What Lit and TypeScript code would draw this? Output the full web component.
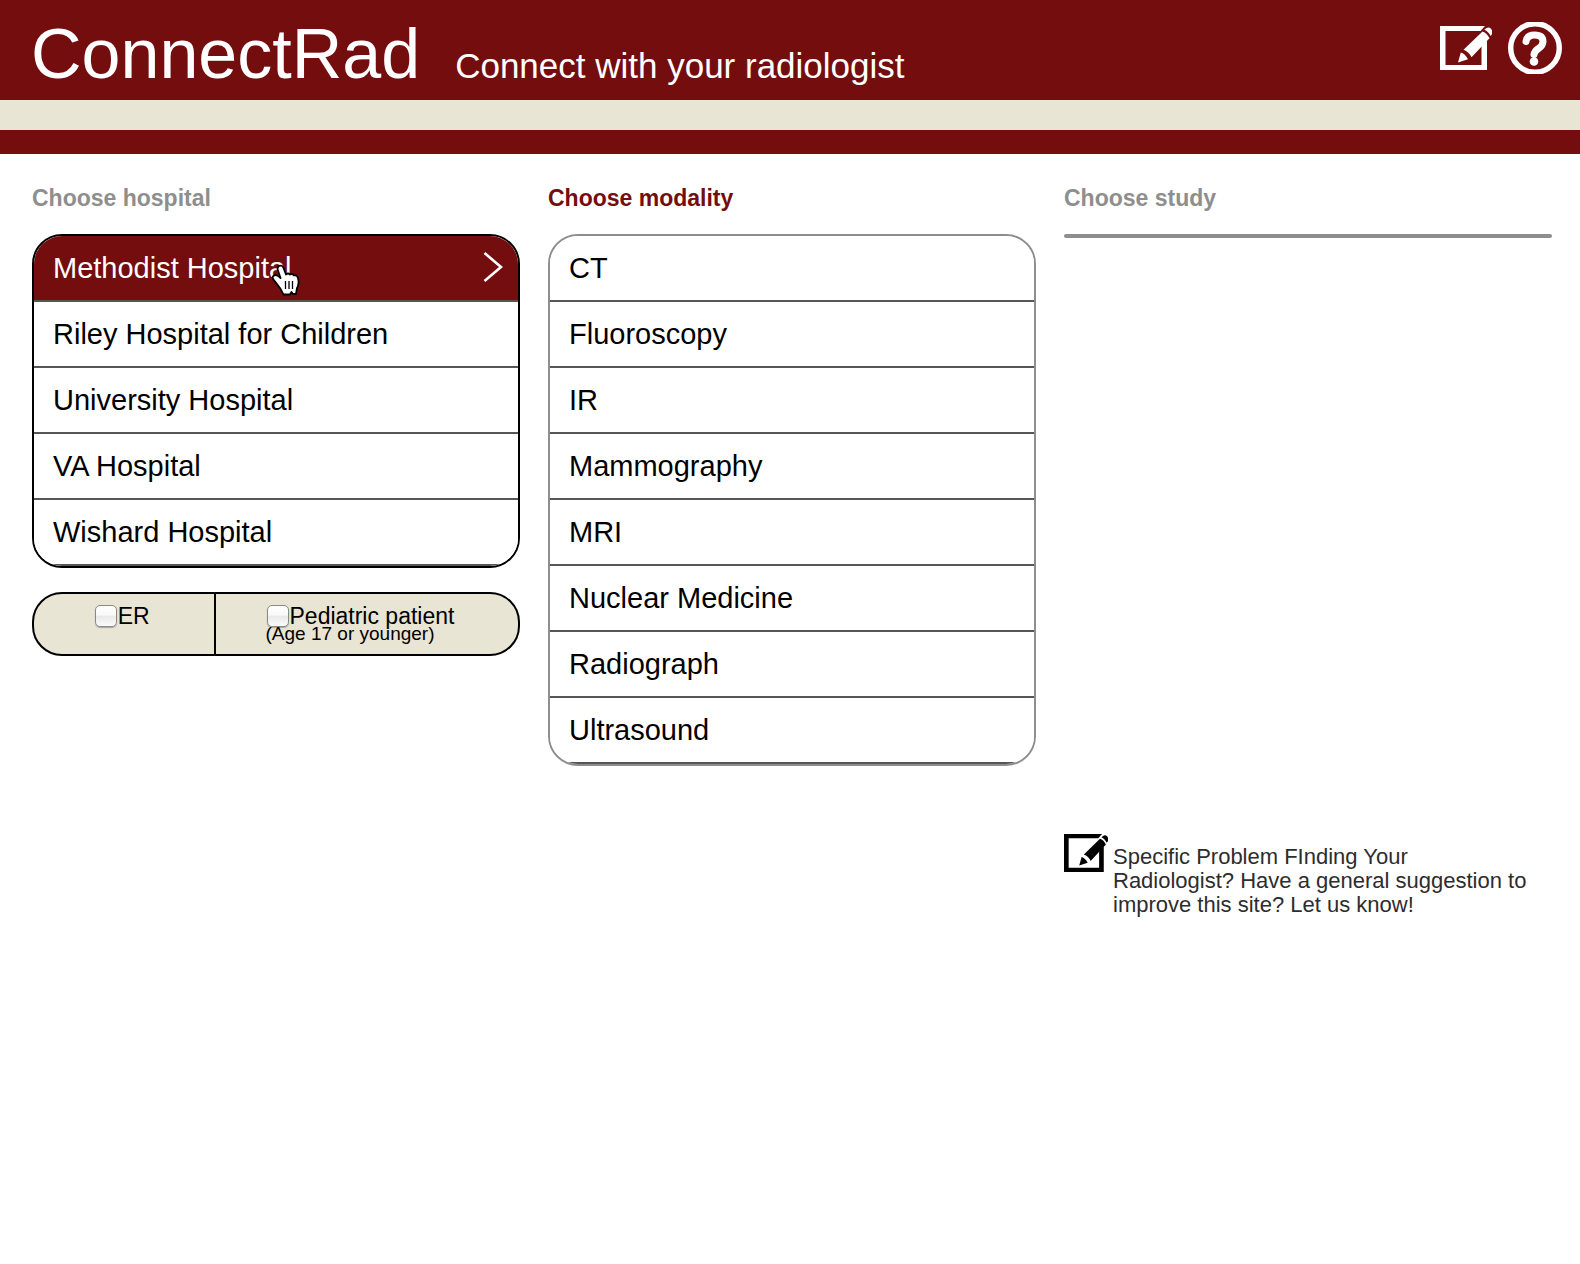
import { LitElement, html, css, svg } from "lit";
import { customElement, property, state } from "lit/decorators.js";
import { classMap } from "lit/directives/class-map.js";

const HOSPITALS = [
  "Methodist Hospital",
  "Riley Hospital for Children",
  "University Hospital",
  "VA Hospital",
  "Wishard Hospital",
];

const MODALITIES = [
  "CT",
  "Fluoroscopy",
  "IR",
  "Mammography",
  "MRI",
  "Nuclear Medicine",
  "Radiograph",
  "Ultrasound",
];

// Square sheet with a pencil across its upper right corner.
const editShape = svg`
  <path fill="currentColor" d="M0 0H45L40.500 5H5.500V39H41.500V20L47 14.500V44H0Z"></path>
  <path fill="currentColor" d="M18 36.500L20.800 26.500Q25 27.500 28 33.200Z"></path>
  <path fill="currentColor" d="M23.500 23.800L42.500 5.500Q47 7 49.500 12.300L31.500 31.300Q29 26 23.500 23.800Z"></path>
  <path fill="currentColor" d="M44.300 3.800L46.500 2Q49 0.800 51.200 3Q53 5.500 51.800 8.500L50.600 10Q48.500 5.500 44.300 3.800Z"></path>`;

@customElement("choice-list")
export class ChoiceList extends LitElement {
  @property({ type: Array }) items: string[] = [];
  @property() selected = "";
  @property({ type: Boolean }) done = false;

  static styles = css`
    :host {
      display: block;
    }
    .list {
      margin: 0;
      padding: 0;
      list-style: none;
      border: 2px solid #8e8e8e;
      border-radius: 30px;
      overflow: hidden;
    }
    .list.done {
      border-color: #000;
    }
    .list.empty {
      border-radius: 2px;
      background: #8e8e8e;
    }
    .item {
      position: relative;
      border-bottom: 2px solid #565656;
    }
    .choice {
      display: flex;
      align-items: center;
      justify-content: space-between;
      width: 100%;
      height: 64px;
      margin: 0;
      padding: 0 15px 0 19px;
      border: 0;
      background: #fff;
      color: #000;
      font: 29px/32px "Liberation Sans", Arial, sans-serif;
      text-align: left;
      cursor: pointer;
    }
    .choice.selected {
      background: #740d0e;
      color: #fff;
    }
    .chevron {
      flex: none;
      width: 20px;
      height: 32px;
      margin-bottom: 2px;
    }
    .pointer {
      position: absolute;
      left: 236px;
      top: 26px;
      width: 34px;
      height: 38px;
      pointer-events: none;
    }
  `;

  private choose(item: string) {
    this.dispatchEvent(new CustomEvent("choose", { detail: item }));
  }

  private renderChevron() {
    return html`
      <svg class="chevron" viewBox="0 0 20 32" aria-hidden="true">
        <path d="M1.500 2L18 16L1.500 30" fill="none" stroke="#fff" stroke-width="2.600"></path>
      </svg>`;
  }

  private renderPointer() {
    return html`
      <svg class="pointer" viewBox="0 0 34 38" aria-hidden="true">
        <path
          d="M9 4Q12 2.500 13.500 6L16 12.500Q18 10.500 20 12.500Q22.500 11 24 13.500Q27 12.500 28 16Q29.500 22 27 26L26 32H23L21.500 30L20 32.500H13.500Q11 26.500 7 22Q3 17.500 2.500 15.500Q3.500 11.500 9 14.500L10.500 16L7.500 7Q7.500 5 9 4Z"
          fill="#fff" stroke="#000" stroke-width="1.800" stroke-linejoin="round"></path>
        <path d="M15.500 19V27M19 19V27M22.500 19V27" stroke="#000" stroke-width="1.300"></path>
      </svg>`;
  }

  render() {
    const empty = this.items.length === 0;
    return html`
      <ul class=${classMap({ list: true, done: this.done, empty })}>
        ${this.items.map((item) => {
          const selected = item === this.selected;
          return html`
            <li class="item">
              <button
                type="button"
                class=${classMap({ choice: true, selected })}
                aria-pressed=${selected ? "true" : "false"}
                @click=${() => this.choose(item)}
              >
                <span>${item}</span>
                ${selected ? this.renderChevron() : null}
              </button>
              ${selected && this.done ? this.renderPointer() : null}
            </li>`;
        })}
      </ul>`;
  }
}

@customElement("app-root")
export class AppRoot extends LitElement {
  @state() private hospital = "Methodist Hospital";
  @state() private modality = "";

  static styles = css`
    :host {
      display: block;
      min-height: 100vh;
      background: #fff;
      color: #000;
      font-family: "Liberation Sans", Arial, sans-serif;
    }
    .banner {
      display: flex;
      align-items: center;
      justify-content: space-between;
      height: 100px;
      padding: 0 18px 0 31px;
      box-sizing: border-box;
      background: #740d0e;
      color: #fff;
    }
    .brand {
      display: flex;
      align-items: baseline;
      gap: 35px;
      padding-top: 8px;
    }
    .name {
      margin: 0;
      font-size: 70px;
      line-height: 80px;
      font-weight: 400;
    }
    .tagline {
      margin: 0;
      font-size: 35px;
      line-height: 40px;
    }
    .tools {
      display: flex;
      align-items: center;
      gap: 16px;
      padding-bottom: 4px;
    }
    .tool {
      display: block;
      color: #fff;
    }
    .tool svg,
    .note-icon {
      display: block;
    }
    .edit {
      width: 52px;
      height: 44px;
    }
    .help {
      width: 54px;
      height: 52px;
    }
    .stripe {
      height: 30px;
      background: #e8e5d5;
      border-bottom: 24px solid #740d0e;
    }
    .steps {
      display: grid;
      grid-template-columns: repeat(3, minmax(0, 1fr));
      column-gap: 28px;
      row-gap: 68px;
      align-items: start;
      padding: 28px 28px 32px 32px;
    }
    .heading {
      margin: 0 0 20px;
      color: #8e8e8e;
      font-size: 23px;
      line-height: 32px;
      font-weight: 700;
    }
    .heading.current {
      color: #740d0e;
    }
    .flags {
      display: grid;
      grid-template-columns: 3fr 5fr;
      height: 60px;
      margin-top: 24px;
      border: 2px solid #000;
      border-radius: 30px;
      background: #e8e5d5;
      overflow: hidden;
    }
    .flag {
      display: flex;
      flex-direction: column;
      align-items: center;
      padding-top: 11px;
    }
    .flag + .flag {
      align-items: flex-start;
      padding-left: 50px;
    }
    .flag:first-child {
      border-right: 2px solid #000;
    }
    .check {
      display: flex;
      align-items: center;
      gap: 1px;
      padding: 0 4px 0 1px;
      font-size: 23px;
      line-height: 22px;
    }
    .box {
      appearance: none;
      width: 22px;
      height: 22px;
      margin: 0;
      border: 1px solid #8a8a86;
      border-radius: 5px;
      background: linear-gradient(#fff, #f8f8f8 45%, #e9e9eb 52%, #fbfbfb);
      box-shadow: 0 1px 1px #a9a79c;
    }
    .box:checked {
      background: #740d0e;
    }
    .hint {
      font-size: 19px;
      line-height: 14px;
    }
    .note {
      grid-column: 3;
      display: flex;
      align-items: flex-start;
      gap: 5px;
      padding-right: 20px;
      color: #2d2d2d;
      text-decoration: none;
    }
    .note-icon {
      flex: none;
      width: 44px;
      height: 38px;
      color: #000;
    }
    .note-text {
      padding-top: 11px;
      font-size: 22px;
      line-height: 24px;
    }
  `;

  render() {
    return html`
      <header>
        <div class="banner">
          <div class="brand">
            <h1 class="name">ConnectRad</h1>
            <p class="tagline">Connect with your radiologist</p>
          </div>
          <nav class="tools">
            <a class="tool" href="#feedback" aria-label="Feedback">
              <svg class="edit" viewBox="0 0 52 44">${editShape}</svg>
            </a>
            <a class="tool" href="#help" aria-label="Help">
              <svg class="help" viewBox="0 0 54 52">
                <circle cx="27" cy="26" r="24.300" fill="none" stroke="#fff" stroke-width="5.400"></circle>
                <path d="M18 19.500Q19 13 26.500 13Q35 13 35 19.500Q35 23.500 30.500 26.500Q26.500 29 26 32.500"
                  fill="none" stroke="#fff" stroke-width="7" stroke-linecap="round"></path>
                <circle cx="26" cy="39.500" r="4.300" fill="#fff"></circle>
              </svg>
            </a>
          </nav>
        </div>
        <div class="stripe"></div>
      </header>
      <main class="steps">
        <section>
          <h2 class="heading">Choose hospital</h2>
          <choice-list
            done
            .items=${HOSPITALS}
            .selected=${this.hospital}
            @choose=${(e: CustomEvent<string>) => (this.hospital = e.detail)}
          ></choice-list>
          <div class="flags">
            <div class="flag">
              <div class="check">
                <input class="box" type="checkbox" id="er" />
                <label for="er">ER</label>
              </div>
            </div>
            <div class="flag">
              <div class="check">
                <input class="box" type="checkbox" id="pediatric" aria-describedby="age" />
                <label for="pediatric">Pediatric patient</label>
              </div>
              <span class="hint" id="age">(Age 17 or younger)</span>
            </div>
          </div>
        </section>
        <section>
          <h2 class="heading current">Choose modality</h2>
          <choice-list
            .items=${MODALITIES}
            .selected=${this.modality}
            @choose=${(e: CustomEvent<string>) => (this.modality = e.detail)}
          ></choice-list>
        </section>
        <section>
          <h2 class="heading">Choose study</h2>
          <choice-list></choice-list>
        </section>
        <a class="note" id="feedback" href="#feedback">
          <svg class="note-icon" viewBox="0 0 52 44" preserveAspectRatio="none" aria-hidden="true">${editShape}</svg>
          <span class="note-text">Specific Problem FInding Your Radiologist? Have a general suggestion to improve this site? Let us know!</span>
        </a>
      </main>`;
  }
}
